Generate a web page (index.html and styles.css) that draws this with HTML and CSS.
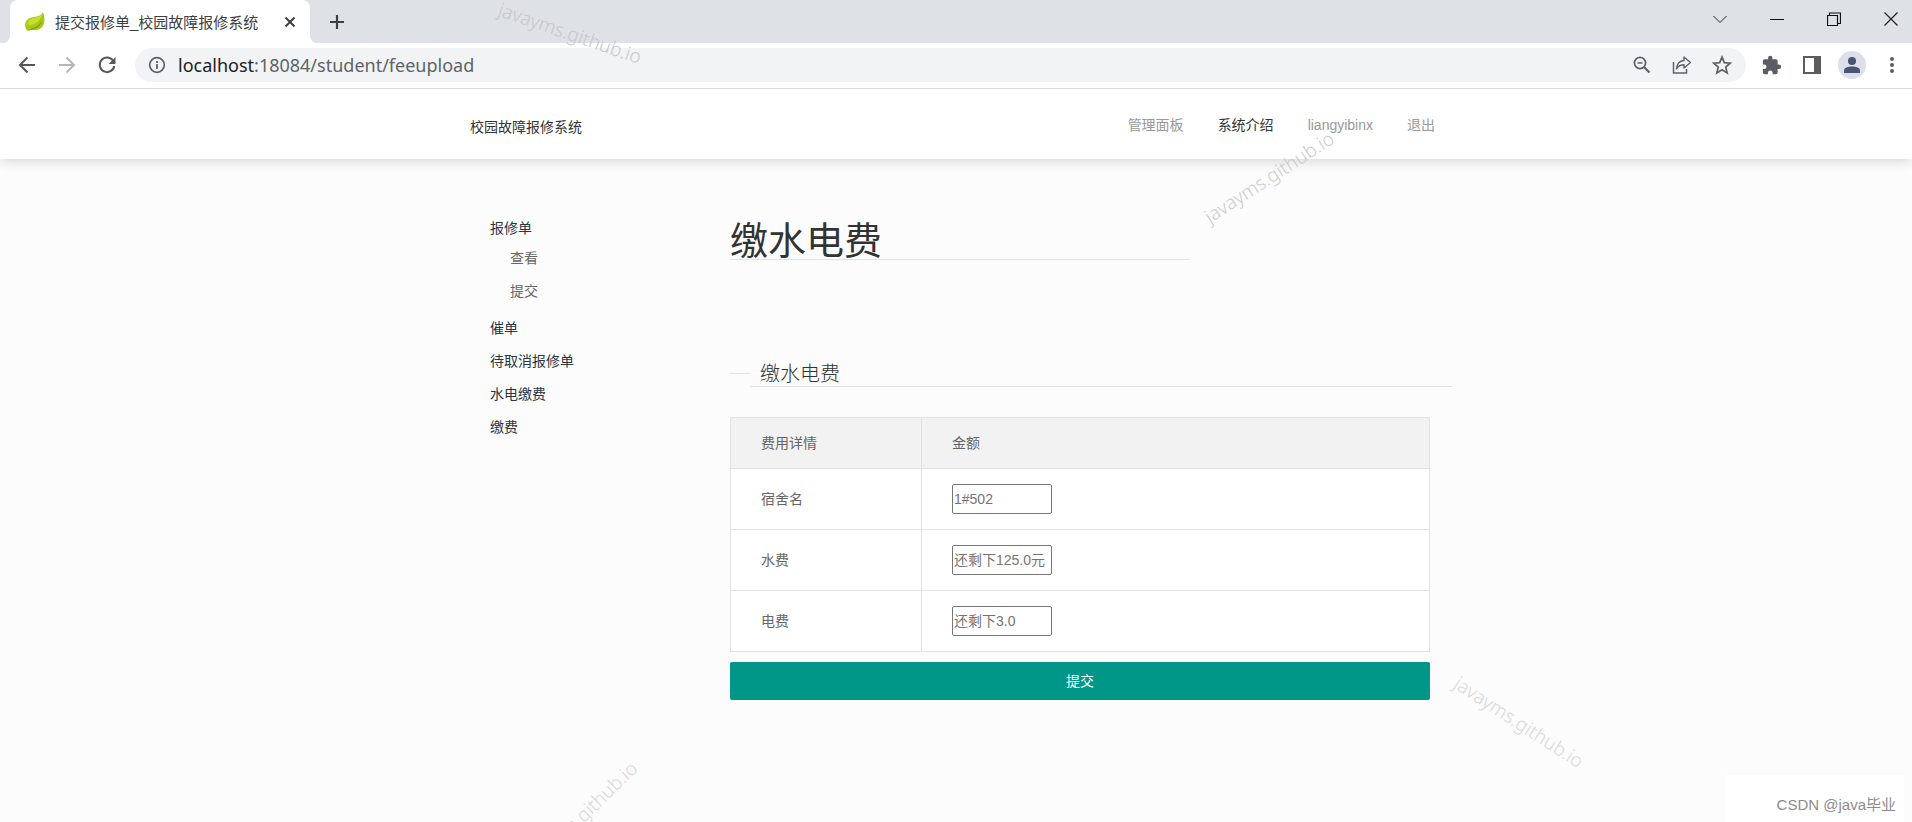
FILE: index.html
```html
<!DOCTYPE html>
<html lang="zh-CN">
<head>
<meta charset="utf-8">
<title>提交报修单_校园故障报修系统</title>
<link rel="stylesheet" href="styles.css">
</head>
<body>
<div class="tabstrip">
  <div class="tab">
    <svg class="leaf" width="22" height="22" viewBox="0 0 22 22"><path d="M19 1c1.500 4 2 8 .8 12-1.600 4.800-6 6.500-10.300 6-2.500-.3-4 .2-5.700 1C1.300 18 .2 14 2 10.500 4.500 6 9 6.500 13 5.500c2.500-.6 4.600-2 6-4.500z" fill="#a4c916"/><path d="M19 1c-1.500 4-4.500 5-8.500 6C6 8 3 10 3.500 13.500 7 15.500 17 12 19 1z" fill="#c6de2c"/><path d="M3.500 18.500c7-1.500 12-3.500 15-9.500-2 7-7.500 10-15 9.500z" fill="#6fa012"/></svg>
    <span class="tab-title">提交报修单_校园故障报修系统</span>
    <button class="tab-close" aria-label="关闭标签页"><svg width="12" height="12" viewBox="0 0 12 12"><path d="M1.500 1.500l9 9m0-9l-9 9" stroke="#3c4043" stroke-width="2"/></svg></button>
  </div>
  <button class="new-tab" aria-label="新标签页"><svg width="16" height="16" viewBox="0 0 16 16"><path d="M8 1v14M1 8h14" stroke="#3c4043" stroke-width="2.200"/></svg></button>
  <div class="window-buttons">
    <button aria-label="标签页列表"><svg width="14" height="14" viewBox="0 0 14 14"><path d="M.5 4l6.500 6.500L13.500 4" fill="none" stroke="#222"/></svg></button>
    <button aria-label="最小化"><svg width="14" height="14" viewBox="0 0 14 14"><path d="M0 7.500h14" stroke="#111"/></svg></button>
    <button aria-label="还原"><svg width="14" height="14" viewBox="0 0 14 14"><path d="M.5 3.500h10v10H.5zM2.500 3V1h11v10.500H11" fill="none" stroke="#111" stroke-width="1.200"/></svg></button>
    <button aria-label="关闭"><svg width="14" height="14" viewBox="0 0 14 14"><path d="M.5.5l13 13m0-13l-13 13" stroke="#222" stroke-width="1.200"/></svg></button>
  </div>
</div>
<div class="toolbar">
  <button class="tool" aria-label="后退"><svg width="18" height="18" viewBox="0 0 18 18"><path d="M17 9H2m7.500-7.500L2 9l7.500 7.500" fill="none" stroke="#54585d" stroke-width="2"/></svg></button>
  <button class="tool" aria-label="前进"><svg width="18" height="18" viewBox="0 0 18 18"><path d="M1 9h15M8.500 1.500L16 9l-7.500 7.500" fill="none" stroke="#b4b6b9" stroke-width="2"/></svg></button>
  <button class="tool" aria-label="重新加载"><svg width="18" height="18" viewBox="0 0 18 18"><path d="M15 4.500A7.300 7.300 0 1 0 16.300 10" fill="none" stroke="#54585d" stroke-width="2"/><path d="M17.500 1v7h-7z" fill="#54585d"/></svg></button>
  <div class="omnibox">
    <button class="tool" aria-label="网站信息"><svg width="18" height="18" viewBox="0 0 18 18"><circle cx="9" cy="9" r="7.300" fill="none" stroke="#5f6368" stroke-width="1.700"/><path d="M9 8v5M9 5v2" stroke="#5f6368" stroke-width="1.800"/></svg></button>
    <div class="url" role="textbox" aria-label="地址" tabindex="0"><span class="host">localhost</span>:18084/student/feeupload</div>
    <button class="tool" aria-label="缩放"><svg width="18" height="18" viewBox="0 0 18 18"><circle cx="7" cy="7" r="5.600" fill="none" stroke="#5f6368" stroke-width="1.800"/><path d="M4.500 7h5" stroke="#5f6368" stroke-width="1.500"/><path d="M11 11l5.500 5.500" stroke="#5f6368" stroke-width="2.200"/></svg></button>
    <button class="tool" aria-label="分享"><svg width="20" height="20" viewBox="0 0 20 20"><path d="M1.500 7v11h13v-4" fill="none" stroke="#5f6368" stroke-width="1.500"/><path d="M12 2l6.500 5.500L12 13v-3.200c-3.500 0-5.500 1-7.500 4 .5-5 3-8 7.500-8.300z" fill="none" stroke="#5f6368" stroke-width="1.400" stroke-linejoin="round"/></svg></button>
    <button class="tool" aria-label="收藏"><svg width="20" height="20" viewBox="0 0 18 18"><path d="M9 2l2.100 4.900 5.300.5-4 3.500 1.200 5.200L9 13.300l-4.600 2.800 1.200-5.200-4-3.500 5.300-.5z" fill="none" stroke="#5f6368" stroke-width="1.600"/></svg></button>
  </div>
  <button class="tool" aria-label="扩展程序"><svg width="20" height="20" viewBox="1 0 23 23"><path d="M20.500 11H19V7a2 2 0 0 0-2-2h-4V3.500a2.500 2.500 0 0 0-5 0V5H4a2 2 0 0 0-2 2v3.800h1.500a2.700 2.700 0 0 1 0 5.400H2V20a2 2 0 0 0 2 2h3.800v-1.500a2.700 2.700 0 0 1 5.400 0V22H17a2 2 0 0 0 2-2v-4h1.500a2.500 2.500 0 0 0 0-5z" fill="#5a5e63"/></svg></button>
  <button class="tool" aria-label="侧边栏"><svg width="18" height="18" viewBox="0 0 18 18"><path d="M1 1h16v16H1z" fill="none" stroke="#5a5e63" stroke-width="2"/><path d="M11 1h6v16h-6z" fill="#5a5e63"/></svg></button>
  <button class="tool avatar" aria-label="用户"><svg width="16" height="16" viewBox="0 0 16 16"><circle cx="8" cy="4" r="4" fill="#4a5470"/><path d="M0 16v-2.500C0 10.800 4 9.500 8 9.500s8 1.300 8 4V16z" fill="#4a5470"/></svg></button>
  <button class="tool" aria-label="菜单"><svg width="4" height="16" viewBox="0 0 4 16"><circle cx="2" cy="2" r="2" fill="#5a5e63"/><circle cx="2" cy="8" r="2" fill="#5a5e63"/><circle cx="2" cy="14" r="2" fill="#5a5e63"/></svg></button>
</div>

<header class="site-header">
  <div class="container header-row">
    <a class="logo" href="#">校园故障报修系统</a>
    <nav class="nav">
      <a href="#">管理面板</a>
      <a class="current" href="#">系统介绍</a>
      <a href="#">liangyibinx</a>
      <a href="#">退出</a>
    </nav>
  </div>
</header>

<div class="container page">
  <aside class="sidebar">
    <ul class="menu">
      <li><a href="#">报修单</a>
        <ul class="submenu">
          <li><a href="#">查看</a></li>
          <li><a href="#">提交</a></li>
        </ul>
      </li>
      <li><a href="#">催单</a></li>
      <li><a href="#">待取消报修单</a></li>
      <li><a href="#">水电缴费</a></li>
      <li><a href="#">缴费</a></li>
    </ul>
  </aside>
  <main class="content">
    <h1>缴水电费</h1>
    <form>
      <fieldset>
        <legend>缴水电费</legend>
        <div class="form-body">
          <table>
            <thead><tr><th class="name-col">费用详情</th><th>金额</th></tr></thead>
            <tbody>
              <tr><td><label for="room">宿舍名</label></td><td><input id="room" type="text" placeholder="1#502"></td></tr>
              <tr><td><label for="water">水费</label></td><td><input id="water" type="text" placeholder="还剩下125.0元"></td></tr>
              <tr><td><label for="power">电费</label></td><td><input id="power" type="text" placeholder="还剩下3.0"></td></tr>
            </tbody>
          </table>
          <button class="submit" type="button">提交</button>
        </div>
      </fieldset>
    </form>
  </main>
</div>

<div class="overlay">
  <span class="mark mark-top">javayms.github.io</span>
  <span class="mark mark-nav">javayms.github.io</span>
  <span class="mark mark-right">javayms.github.io</span>
  <span class="mark mark-bottom">javayms.github.io</span>
  <div class="credit">CSDN @java毕业</div>
</div>
</body>
</html>
```
FILE: styles.css
```css
* { box-sizing: border-box; }
html { height: 100%; }
body {
  position: relative;
  min-height: 100%;
  margin: 0;
  background: #fcfcfc;
  color: #666;
  font: 14px/20px "Liberation Sans", "Noto Sans CJK SC", sans-serif;
}
button { padding: 0; border: 0; background: none; font: inherit; }
button svg, .leaf { display: block; }
a { color: inherit; text-decoration: none; }
ul { margin: 0; padding: 0; list-style: none; }

.tabstrip { display: flex; height: 43px; padding-left: 10px; background: #dee1e6; }
.tab {
  display: flex;
  align-items: center;
  position: relative;
  width: 300px;
  padding: 0 14px;
  border-radius: 8px 8px 0 0;
  background: #fff;
}
.tab::before, .tab::after {
  content: "";
  position: absolute;
  bottom: 0;
  width: 8px;
  height: 8px;
}
.tab::before { right: 100%; background: radial-gradient(circle at 0 0, transparent 8px, #fff 8px); }
.tab::after { left: 100%; background: radial-gradient(circle at 100% 0, transparent 8px, #fff 8px); }
.tab-title { flex: 1; margin-left: 9px; padding-top: 2px; color: #3c4043; font-size: 15px; white-space: nowrap; }
.new-tab { margin-left: 19px; }
.window-buttons { display: flex; gap: 15px; height: 37px; margin-left: auto; }
.window-buttons button { display: grid; place-items: center; width: 42px; }

.toolbar {
  display: flex;
  align-items: center;
  position: relative;
  z-index: 1;
  gap: 12px;
  height: 46px;
  padding: 0 6px 1px 13px;
  border-bottom: 1px solid #d8dadd;
  background: #fff;
}
.tool { display: grid; place-items: center; flex: none; width: 28px; height: 28px; }
.avatar { border-radius: 50%; background: #dadfea; }
.omnibox {
  display: flex;
  flex: 1;
  align-items: center;
  gap: 12px;
  height: 34px;
  margin-left: 2px;
  padding: 0 10px 0 8px;
  border-radius: 17px;
  background: #f1f3f4;
}
.url { flex: 1; margin-left: -5px; color: #5f6368; font: 18px/28px "Noto Sans", sans-serif; }
.host { color: #202124; }

.container { max-width: 992px; margin: 0 auto; }
.site-header { position: relative; background: #fff; box-shadow: 0 2px 12px rgba(0, 0, 0, 0.16); }
.header-row { display: flex; align-items: center; justify-content: space-between; height: 70px; padding: 2px 17px 0 10px; }
.logo { padding-top: 4px; color: #333; }
.nav { display: flex; gap: 34px; color: #999; }
.nav .current { color: #333; }

.page { display: flex; }
.sidebar { flex: none; width: 270px; padding: 59px 0 0 30px; }
.menu { display: grid; gap: 13px; color: #2b3540; }
.submenu { display: grid; gap: 13px; padding: 10px 0 4px 20px; color: #666; }
.content { flex: 1; padding-top: 60px; }
h1 {
  max-width: 460px;
  height: 41px;
  margin: 0 0 100px;
  border-bottom: 1px solid #e2e2e2;
  color: #333;
  font-size: 38px;
  font-weight: 400;
  line-height: 44px;
}
fieldset { min-width: 0; margin: 0; padding: 0; border: 0; border-top: 1px solid #e2e2e2; }
legend {
  width: calc(100% - 20px);
  height: 27px;
  margin-left: 20px;
  padding: 0 10px;
  border-bottom: 1px solid #e2e2e2;
  color: #333;
  font-size: 20px;
  font-weight: 300;
  line-height: 28px;
}
.form-body { margin: 30px 22px 0 0; }
table { width: 100%; border-collapse: collapse; background: #fff; }
th, td { padding: 15px 30px; border: 1px solid #e2e2e2; font-weight: 400; text-align: left; }
th { background: #f2f2f2; }
.name-col { width: 191px; }
input {
  display: block;
  width: 100px;
  height: 30px;
  padding: 1px;
  border: 1px solid #767676;
  border-radius: 2px;
  background: #fff;
  font: inherit;
}
input::placeholder { color: #757575; }
.submit {
  display: block;
  width: 100%;
  height: 38px;
  margin-top: 10px;
  border-radius: 2px;
  background: #009688;
  color: #fff;
}

.overlay { position: absolute; inset: 0; z-index: 2; overflow: hidden; pointer-events: none; }
.mark {
  position: absolute;
  translate: -50% -50%;
  color: #d8d8d8;
  font: 300 19px/24px "Noto Sans", sans-serif;
  white-space: nowrap;
}
.mark-top { left: 570px; top: 33px; rotate: 19deg; color: #c6c8cc; }
.mark-nav { left: 1269px; top: 177px; rotate: -33deg; color: #ccc; }
.mark-right { left: 1519px; top: 722px; rotate: 33deg; }
.mark-bottom { left: 580px; top: 817px; rotate: -44deg; }
.credit {
  position: absolute;
  right: 8px;
  bottom: 0;
  padding: 20px 8px 7px 52px;
  background: #fff;
  color: #8c8c8c;
  font-size: 15px;
}
```
